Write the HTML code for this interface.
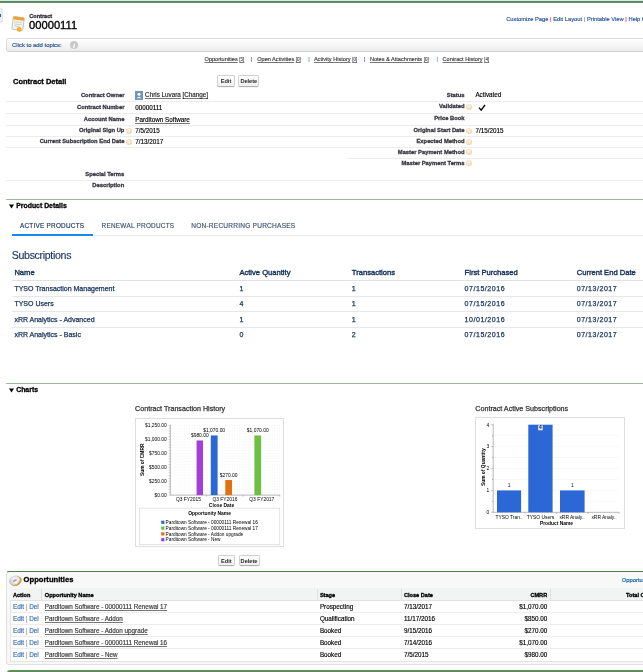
<!DOCTYPE html>
<html><head><meta charset="utf-8"><style>
html,body{margin:0;padding:0;background:#fff;width:643px;height:672px;overflow:hidden;position:relative}
body{font-family:"Liberation Sans",sans-serif}
.t{position:absolute;white-space:nowrap;line-height:1;-webkit-text-stroke:0.15px currentColor}
.sep{color:#c37;margin:0 0.1px}
.sep2{color:#7a9a70;margin:0 0.1px}
u{text-decoration-thickness:0.3px;text-underline-offset:0.5px;text-decoration-color:#777}
</style></head><body><div id="wrap" style="position:absolute;left:0;top:0;width:643px;height:672px;will-change:transform">
<div style="position:absolute;left:0px;top:0px;width:643px;height:1px;background:#d4e8f6"></div>
<div style="position:absolute;left:0px;top:1px;width:643px;height:2px;background:linear-gradient(#5a8552,#6a9060)"></div>
<div style="position:absolute;left:-3px;top:7.6px;width:5.5px;height:15.7px;background:#eeeeee;border:0.5px solid #e2e2e2;border-radius:2.5px;box-sizing:border-box"></div>
<div style="position:absolute;left:0px;top:14.4px;width:1.2px;height:2.5px;background:#2a5ab0"></div>
<svg style="position:absolute;left:10px;top:15px" width="16" height="18" viewBox="0 0 16 18">
<g transform="rotate(8 8 9)">
<rect x="2.5" y="2" width="11" height="13" rx="1" fill="#f4f4f0" stroke="#b9b9b0" stroke-width="0.8"/>
<rect x="2.5" y="2" width="11" height="3" rx="1" fill="#f0a030"/>
<rect x="4.5" y="7" width="7" height="0.8" fill="#c8c8c0"/>
<rect x="4.5" y="9" width="7" height="0.8" fill="#c8c8c0"/>
<rect x="4.5" y="11" width="5" height="0.8" fill="#c8c8c0"/>
<circle cx="10" cy="14.2" r="2.1" fill="#f5b82e" stroke="#e09a10" stroke-width="0.5"/>
</g></svg>
<div class="t" style="top:14.06px;font-size:5.6px;color:#333340;font-weight:bold;-webkit-text-stroke:0.3px currentColor;left:29.20px;">Contract</div>
<div class="t" style="top:20.12px;font-size:11.2px;color:#000;left:29.00px;-webkit-text-stroke:0.35px #000;">00000111</div>
<div class="t" style="top:17.23px;font-size:5.75px;color:#1f5096;left:506.20px;">Customize Page <span class="sep">|</span> Edit Layout <span class="sep2">|</span> Printable View <span class="sep">|</span> Help for this Page</div>
<div style="position:absolute;left:6.2px;top:38.4px;width:660px;height:13.5px;border:1px solid #dadada;border-bottom-color:#cfcfcf;border-radius:3px;background:linear-gradient(#ffffff,#ececec);box-sizing:border-box"></div>
<div class="t" style="top:42.81px;font-size:5.9px;color:#24508e;left:12.10px;">Click to add topics:</div>
<div style="position:absolute;left:70.1px;top:41.3px;width:7.8px;height:7.8px;border-radius:50%;background:#c8c8c8"></div>
<div class="t" style="top:43.74px;font-size:5.5px;color:#fff;font-weight:bold;-webkit-text-stroke:0.3px currentColor;left:74.00px;transform:translateX(-50%);font-style:italic;">i</div>
<div class="t" style="top:57.26px;font-size:5.6px;color:#3a3a3a;left:204.50px;"><u>Opportunities</u> <u style="font-size:4.5px;color:#555">[5]</u></div>
<div class="t" style="top:57.26px;font-size:5.6px;color:#3a3a3a;left:257.20px;"><u>Open Activities</u> <u style="font-size:4.5px;color:#555">[0]</u></div>
<div class="t" style="top:57.26px;font-size:5.6px;color:#3a3a3a;left:313.90px;"><u>Activity History</u> <u style="font-size:4.5px;color:#555">[0]</u></div>
<div class="t" style="top:57.26px;font-size:5.6px;color:#3a3a3a;left:369.90px;"><u>Notes &amp; Attachments</u> <u style="font-size:4.5px;color:#555">[0]</u></div>
<div class="t" style="top:57.26px;font-size:5.6px;color:#3a3a3a;left:442.50px;"><u>Contract History</u> <u style="font-size:4.5px;color:#555">[4]</u></div>
<div class="t" style="top:57.26px;font-size:5.6px;color:#c37;left:251.00px;">|</div>
<div class="t" style="top:57.26px;font-size:5.6px;color:#6a8ab8;left:308.20px;">|</div>
<div class="t" style="top:57.26px;font-size:5.6px;color:#c37;left:363.70px;">|</div>
<div class="t" style="top:57.26px;font-size:5.6px;color:#6a8ab8;left:436.60px;">|</div>
<div style="position:absolute;left:217.2px;top:75.1px;width:17.6px;height:11.6px;border:1px solid #d0d0d0;border-bottom-color:#b0b0b0;border-radius:2px;background:linear-gradient(#fff,#f0f0f0);box-sizing:border-box;box-shadow:0 0.5px 0.5px rgba(0,0,0,0.08)"></div>
<div class="t" style="top:78.96px;font-size:5.6px;color:#333;font-weight:bold;-webkit-text-stroke:0.3px currentColor;left:226.00px;transform:translateX(-50%);-webkit-text-stroke:0.05px #333;">Edit</div>
<div style="position:absolute;left:238.2px;top:75.1px;width:21.2px;height:11.6px;border:1px solid #d0d0d0;border-bottom-color:#b0b0b0;border-radius:2px;background:linear-gradient(#fff,#f0f0f0);box-sizing:border-box;box-shadow:0 0.5px 0.5px rgba(0,0,0,0.08)"></div>
<div class="t" style="top:78.96px;font-size:5.6px;color:#333;font-weight:bold;-webkit-text-stroke:0.3px currentColor;left:248.80px;transform:translateX(-50%);-webkit-text-stroke:0.05px #333;">Delete</div>
<div class="t" style="top:78.45px;font-size:7.5px;color:#000;font-weight:bold;-webkit-text-stroke:0.3px currentColor;left:13.00px;">Contract Detail</div>
<div style="position:absolute;left:6px;top:101.3px;width:637px;height:1px;background:#ececec"></div>
<div style="position:absolute;left:6px;top:113.3px;width:637px;height:1px;background:#ececec"></div>
<div style="position:absolute;left:6px;top:124.8px;width:637px;height:1px;background:#ececec"></div>
<div style="position:absolute;left:6px;top:136.2px;width:637px;height:1px;background:#ececec"></div>
<div style="position:absolute;left:6px;top:147.3px;width:637px;height:1px;background:#ececec"></div>
<div style="position:absolute;left:347.4px;top:158.2px;width:296px;height:1px;background:#ececec"></div>
<div class="t" style="top:92.69px;font-size:5.8px;color:#383844;font-weight:bold;-webkit-text-stroke:0.3px currentColor;right:518.60px;">Contract Owner</div>
<div style="position:absolute;left:135px;top:91px;width:8px;height:8.6px;background:#7493b8"></div>
<svg style="position:absolute;left:135px;top:91px" width="8" height="9" viewBox="0 0 8 9"><circle cx="4" cy="3.2" r="1.5" fill="#fff"/><path d="M1.6 7.2 Q4 4.2 6.4 7.2 Z" fill="#fff"/></svg>
<div class="t" style="top:92.27px;font-size:6.3px;color:#222;left:145.10px;"><u>Chris Luvara</u> <u>[Change]</u></div>
<div class="t" style="top:105.29px;font-size:5.8px;color:#383844;font-weight:bold;-webkit-text-stroke:0.3px currentColor;right:518.60px;">Contract Number</div>
<div class="t" style="top:104.87px;font-size:6.3px;color:#000;left:135.20px;">00000111</div>
<div class="t" style="top:117.09px;font-size:5.8px;color:#383844;font-weight:bold;-webkit-text-stroke:0.3px currentColor;right:518.60px;">Account Name</div>
<div class="t" style="top:116.67px;font-size:6.3px;color:#000;left:135.20px;"><u>Parditown Software</u></div>
<div class="t" style="top:128.49px;font-size:5.8px;color:#383844;font-weight:bold;-webkit-text-stroke:0.3px currentColor;right:518.60px;">Original Sign Up</div>
<div style="position:absolute;left:125.9px;top:127.9px;width:6.2px;height:6.2px;border-radius:50%;background:radial-gradient(circle at 45% 40%,#fbf0dc,#f2dcb4 55%,#e2c090)"></div>
<svg style="position:absolute;left:125.90px;top:127.90px" width="6.2" height="6.2" viewBox="0 0 6.2 6.2"><path d="M2.3 2.4 Q2.4 1.5 3.2 1.5 Q4.0 1.6 4.0 2.3 Q4.0 2.9 3.2 3.3 L3.2 3.8" stroke="#fff" stroke-width="0.6" fill="none"/><circle cx="3.2" cy="4.6" r="0.35" fill="#fff"/></svg>
<div class="t" style="top:128.07px;font-size:6.3px;color:#000;left:135.20px;">7/5/2015</div>
<div class="t" style="top:139.49px;font-size:5.8px;color:#383844;font-weight:bold;-webkit-text-stroke:0.3px currentColor;right:518.60px;">Current Subscription End Date</div>
<div style="position:absolute;left:125.9px;top:138.9px;width:6.2px;height:6.2px;border-radius:50%;background:radial-gradient(circle at 45% 40%,#fbf0dc,#f2dcb4 55%,#e2c090)"></div>
<svg style="position:absolute;left:125.90px;top:138.90px" width="6.2" height="6.2" viewBox="0 0 6.2 6.2"><path d="M2.3 2.4 Q2.4 1.5 3.2 1.5 Q4.0 1.6 4.0 2.3 Q4.0 2.9 3.2 3.3 L3.2 3.8" stroke="#fff" stroke-width="0.6" fill="none"/><circle cx="3.2" cy="4.6" r="0.35" fill="#fff"/></svg>
<div class="t" style="top:139.07px;font-size:6.3px;color:#000;left:135.20px;">7/13/2017</div>
<div class="t" style="top:92.69px;font-size:5.8px;color:#383844;font-weight:bold;-webkit-text-stroke:0.3px currentColor;right:178.50px;">Status</div>
<div class="t" style="top:92.27px;font-size:6.3px;color:#000;left:475.40px;">Activated</div>
<div class="t" style="top:104.49px;font-size:5.8px;color:#383844;font-weight:bold;-webkit-text-stroke:0.3px currentColor;right:178.50px;">Validated</div>
<div style="position:absolute;left:466.2px;top:103.89999999999999px;width:6.2px;height:6.2px;border-radius:50%;background:radial-gradient(circle at 45% 40%,#fbf0dc,#f2dcb4 55%,#e2c090)"></div>
<svg style="position:absolute;left:466.20px;top:103.90px" width="6.2" height="6.2" viewBox="0 0 6.2 6.2"><path d="M2.3 2.4 Q2.4 1.5 3.2 1.5 Q4.0 1.6 4.0 2.3 Q4.0 2.9 3.2 3.3 L3.2 3.8" stroke="#fff" stroke-width="0.6" fill="none"/><circle cx="3.2" cy="4.6" r="0.35" fill="#fff"/></svg>
<svg style="position:absolute;left:477px;top:103.5px" width="9" height="8" viewBox="0 0 9 8"><path d="M2 3.6 L4.2 6.2 L8 0.8" stroke="#000" stroke-width="1.35" fill="none"/></svg>
<div class="t" style="top:116.39px;font-size:5.8px;color:#383844;font-weight:bold;-webkit-text-stroke:0.3px currentColor;right:178.50px;">Price Book</div>
<div class="t" style="top:128.09px;font-size:5.8px;color:#383844;font-weight:bold;-webkit-text-stroke:0.3px currentColor;right:178.50px;">Original Start Date</div>
<div style="position:absolute;left:466.2px;top:127.5px;width:6.2px;height:6.2px;border-radius:50%;background:radial-gradient(circle at 45% 40%,#fbf0dc,#f2dcb4 55%,#e2c090)"></div>
<svg style="position:absolute;left:466.20px;top:127.50px" width="6.2" height="6.2" viewBox="0 0 6.2 6.2"><path d="M2.3 2.4 Q2.4 1.5 3.2 1.5 Q4.0 1.6 4.0 2.3 Q4.0 2.9 3.2 3.3 L3.2 3.8" stroke="#fff" stroke-width="0.6" fill="none"/><circle cx="3.2" cy="4.6" r="0.35" fill="#fff"/></svg>
<div class="t" style="top:127.67px;font-size:6.3px;color:#000;left:475.40px;">7/15/2015</div>
<div class="t" style="top:139.19px;font-size:5.8px;color:#383844;font-weight:bold;-webkit-text-stroke:0.3px currentColor;right:178.50px;">Expected Method</div>
<div style="position:absolute;left:466.2px;top:138.60000000000002px;width:6.2px;height:6.2px;border-radius:50%;background:radial-gradient(circle at 45% 40%,#fbf0dc,#f2dcb4 55%,#e2c090)"></div>
<svg style="position:absolute;left:466.20px;top:138.60px" width="6.2" height="6.2" viewBox="0 0 6.2 6.2"><path d="M2.3 2.4 Q2.4 1.5 3.2 1.5 Q4.0 1.6 4.0 2.3 Q4.0 2.9 3.2 3.3 L3.2 3.8" stroke="#fff" stroke-width="0.6" fill="none"/><circle cx="3.2" cy="4.6" r="0.35" fill="#fff"/></svg>
<div class="t" style="top:149.79px;font-size:5.8px;color:#383844;font-weight:bold;-webkit-text-stroke:0.3px currentColor;right:178.50px;">Master Payment Method</div>
<div style="position:absolute;left:466.2px;top:149.20000000000002px;width:6.2px;height:6.2px;border-radius:50%;background:radial-gradient(circle at 45% 40%,#fbf0dc,#f2dcb4 55%,#e2c090)"></div>
<svg style="position:absolute;left:466.20px;top:149.20px" width="6.2" height="6.2" viewBox="0 0 6.2 6.2"><path d="M2.3 2.4 Q2.4 1.5 3.2 1.5 Q4.0 1.6 4.0 2.3 Q4.0 2.9 3.2 3.3 L3.2 3.8" stroke="#fff" stroke-width="0.6" fill="none"/><circle cx="3.2" cy="4.6" r="0.35" fill="#fff"/></svg>
<div class="t" style="top:160.79px;font-size:5.8px;color:#383844;font-weight:bold;-webkit-text-stroke:0.3px currentColor;right:178.50px;">Master Payment Terms</div>
<div style="position:absolute;left:466.2px;top:160.20000000000002px;width:6.2px;height:6.2px;border-radius:50%;background:radial-gradient(circle at 45% 40%,#fbf0dc,#f2dcb4 55%,#e2c090)"></div>
<svg style="position:absolute;left:466.20px;top:160.20px" width="6.2" height="6.2" viewBox="0 0 6.2 6.2"><path d="M2.3 2.4 Q2.4 1.5 3.2 1.5 Q4.0 1.6 4.0 2.3 Q4.0 2.9 3.2 3.3 L3.2 3.8" stroke="#fff" stroke-width="0.6" fill="none"/><circle cx="3.2" cy="4.6" r="0.35" fill="#fff"/></svg>
<div class="t" style="top:171.89px;font-size:5.8px;color:#383844;font-weight:bold;-webkit-text-stroke:0.3px currentColor;right:518.80px;">Special Terms</div>
<div style="position:absolute;left:6px;top:179.8px;width:637px;height:1px;background:#ececec"></div>
<div class="t" style="top:183.19px;font-size:5.8px;color:#383844;font-weight:bold;-webkit-text-stroke:0.3px currentColor;right:518.80px;">Description</div>
<div style="position:absolute;left:6px;top:198.5px;width:637px;height:1.2px;background:#9cbc98"></div>
<svg style="position:absolute;left:8.5px;top:203.5px" width="5" height="5" viewBox="0 0 5 5"><path d="M0 0.5 L5 0.5 L2.5 4.5 Z" fill="#000"/></svg>
<div class="t" style="top:202.96px;font-size:6.9px;color:#000;font-weight:bold;-webkit-text-stroke:0.3px currentColor;left:16.20px;">Product Details</div>
<div class="t" style="top:222.78px;font-size:6.4px;color:#16325c;left:19.90px;letter-spacing:0.25px;">ACTIVE PRODUCTS</div>
<div class="t" style="top:222.78px;font-size:6.4px;color:#3d5270;left:101.60px;letter-spacing:0.25px;">RENEWAL PRODUCTS</div>
<div class="t" style="top:222.61px;font-size:6.6px;color:#3d5270;left:191.20px;letter-spacing:0.2px;">NON-RECURRING PURCHASES</div>
<div style="position:absolute;left:11.7px;top:235px;width:631.3px;height:1px;background:#e6e9ef"></div>
<div style="position:absolute;left:11.7px;top:234px;width:81.3px;height:2px;background:#1589ee"></div>
<div class="t" style="top:250.23px;font-size:10.6px;color:#16325c;left:11.80px;letter-spacing:-0.33px;">Subscriptions</div>
<div class="t" style="top:268.87px;font-size:7.6px;color:#16325c;left:14.40px;-webkit-text-stroke:0.4px currentColor;">Name</div>
<div class="t" style="top:268.87px;font-size:7.6px;color:#16325c;left:239.40px;-webkit-text-stroke:0.4px currentColor;">Active Quantity</div>
<div class="t" style="top:268.87px;font-size:7.6px;color:#16325c;left:351.80px;-webkit-text-stroke:0.4px currentColor;">Transactions</div>
<div class="t" style="top:268.87px;font-size:7.6px;color:#16325c;left:464.60px;-webkit-text-stroke:0.4px currentColor;">First Purchased</div>
<div class="t" style="top:268.87px;font-size:7.6px;color:#16325c;left:576.70px;-webkit-text-stroke:0.4px currentColor;">Current End Date</div>
<div style="position:absolute;left:11.7px;top:280px;width:631.3px;height:1.3px;background:#dde1e6"></div>
<div class="t" style="top:285.07px;font-size:7.0px;color:#16325c;left:14.40px;-webkit-text-stroke:0.25px currentColor;">TYSO Transaction Management</div>
<div class="t" style="top:285.07px;font-size:7.0px;color:#16325c;left:239.40px;-webkit-text-stroke:0.25px currentColor;">1</div>
<div class="t" style="top:285.07px;font-size:7.0px;color:#16325c;left:351.80px;-webkit-text-stroke:0.25px currentColor;">1</div>
<div class="t" style="top:285.07px;font-size:7.0px;color:#16325c;left:464.60px;letter-spacing:0.55px;-webkit-text-stroke:0.25px currentColor;">07/15/2016</div>
<div class="t" style="top:285.07px;font-size:7.0px;color:#16325c;left:576.70px;letter-spacing:0.55px;-webkit-text-stroke:0.25px currentColor;">07/13/2017</div>
<div class="t" style="top:300.47px;font-size:7.0px;color:#16325c;left:14.40px;-webkit-text-stroke:0.25px currentColor;">TYSO Users</div>
<div class="t" style="top:300.47px;font-size:7.0px;color:#16325c;left:239.40px;-webkit-text-stroke:0.25px currentColor;">4</div>
<div class="t" style="top:300.47px;font-size:7.0px;color:#16325c;left:351.80px;-webkit-text-stroke:0.25px currentColor;">1</div>
<div class="t" style="top:300.47px;font-size:7.0px;color:#16325c;left:464.60px;letter-spacing:0.55px;-webkit-text-stroke:0.25px currentColor;">07/15/2016</div>
<div class="t" style="top:300.47px;font-size:7.0px;color:#16325c;left:576.70px;letter-spacing:0.55px;-webkit-text-stroke:0.25px currentColor;">07/13/2017</div>
<div class="t" style="top:315.67px;font-size:7.0px;color:#16325c;left:14.40px;-webkit-text-stroke:0.25px currentColor;">xRR Analytics - Advanced</div>
<div class="t" style="top:315.67px;font-size:7.0px;color:#16325c;left:239.40px;-webkit-text-stroke:0.25px currentColor;">1</div>
<div class="t" style="top:315.67px;font-size:7.0px;color:#16325c;left:351.80px;-webkit-text-stroke:0.25px currentColor;">1</div>
<div class="t" style="top:315.67px;font-size:7.0px;color:#16325c;left:464.60px;letter-spacing:0.55px;-webkit-text-stroke:0.25px currentColor;">10/01/2016</div>
<div class="t" style="top:315.67px;font-size:7.0px;color:#16325c;left:576.70px;letter-spacing:0.55px;-webkit-text-stroke:0.25px currentColor;">07/13/2017</div>
<div class="t" style="top:330.67px;font-size:7.0px;color:#16325c;left:14.40px;-webkit-text-stroke:0.25px currentColor;">xRR Analytics - Basic</div>
<div class="t" style="top:330.67px;font-size:7.0px;color:#16325c;left:239.40px;-webkit-text-stroke:0.25px currentColor;">0</div>
<div class="t" style="top:330.67px;font-size:7.0px;color:#16325c;left:351.80px;-webkit-text-stroke:0.25px currentColor;">2</div>
<div class="t" style="top:330.67px;font-size:7.0px;color:#16325c;left:464.60px;letter-spacing:0.55px;-webkit-text-stroke:0.25px currentColor;">07/15/2016</div>
<div class="t" style="top:330.67px;font-size:7.0px;color:#16325c;left:576.70px;letter-spacing:0.55px;-webkit-text-stroke:0.25px currentColor;">07/13/2017</div>
<div style="position:absolute;left:11.7px;top:296.4px;width:631.3px;height:1px;background:#e4e7eb"></div>
<div style="position:absolute;left:11.7px;top:311.4px;width:631.3px;height:1px;background:#e4e7eb"></div>
<div style="position:absolute;left:11.7px;top:326.6px;width:631.3px;height:1px;background:#e4e7eb"></div>
<div style="position:absolute;left:6px;top:382.5px;width:637px;height:1.2px;background:#9cbc98"></div>
<svg style="position:absolute;left:8.5px;top:387.5px" width="5" height="5" viewBox="0 0 5 5"><path d="M0 0.5 L5 0.5 L2.5 4.5 Z" fill="#000"/></svg>
<div class="t" style="top:386.96px;font-size:6.9px;color:#000;font-weight:bold;-webkit-text-stroke:0.3px currentColor;left:16.20px;">Charts</div>
<div class="t" style="top:405.95px;font-size:7.15px;color:#333;left:135.10px;-webkit-text-stroke:0.25px #333;">Contract Transaction History</div>
<div class="t" style="top:405.95px;font-size:7.15px;color:#333;left:475.30px;-webkit-text-stroke:0.25px #333;">Contract Active Subscriptions</div>
<div id="chart1" style="position:absolute;left:134.5px;top:417.5px;width:149px;height:129px;border:1px solid #dedede;box-sizing:border-box"></div>
<div id="chart2" style="position:absolute;left:475px;top:417px;width:149.5px;height:111.5px;border:1px solid #dedede;box-sizing:border-box"></div>
<svg style="position:absolute;left:0;top:0" width="643" height="672" font-family="Liberation Sans">
<line x1="171.8" y1="425.40" x2="280" y2="425.40" stroke="#d8d8d8" stroke-width="0.45" stroke-dasharray="0.6 1.9"/>
<line x1="168.70000000000002" y1="425.40" x2="170.3" y2="425.40" stroke="#777" stroke-width="0.4"/>
<line x1="171.8" y1="428.19" x2="280" y2="428.19" stroke="#d8d8d8" stroke-width="0.45" stroke-dasharray="0.6 1.9"/>
<line x1="168.70000000000002" y1="428.19" x2="170.3" y2="428.19" stroke="#777" stroke-width="0.4"/>
<line x1="171.8" y1="430.98" x2="280" y2="430.98" stroke="#d8d8d8" stroke-width="0.45" stroke-dasharray="0.6 1.9"/>
<line x1="168.70000000000002" y1="430.98" x2="170.3" y2="430.98" stroke="#777" stroke-width="0.4"/>
<line x1="171.8" y1="433.76" x2="280" y2="433.76" stroke="#d8d8d8" stroke-width="0.45" stroke-dasharray="0.6 1.9"/>
<line x1="168.70000000000002" y1="433.76" x2="170.3" y2="433.76" stroke="#777" stroke-width="0.4"/>
<line x1="171.8" y1="436.55" x2="280" y2="436.55" stroke="#d8d8d8" stroke-width="0.45" stroke-dasharray="0.6 1.9"/>
<line x1="168.70000000000002" y1="436.55" x2="170.3" y2="436.55" stroke="#777" stroke-width="0.4"/>
<line x1="171.8" y1="439.34" x2="280" y2="439.34" stroke="#d8d8d8" stroke-width="0.45" stroke-dasharray="0.6 1.9"/>
<line x1="168.70000000000002" y1="439.34" x2="170.3" y2="439.34" stroke="#777" stroke-width="0.4"/>
<line x1="171.8" y1="442.13" x2="280" y2="442.13" stroke="#d8d8d8" stroke-width="0.45" stroke-dasharray="0.6 1.9"/>
<line x1="168.70000000000002" y1="442.13" x2="170.3" y2="442.13" stroke="#777" stroke-width="0.4"/>
<line x1="171.8" y1="444.92" x2="280" y2="444.92" stroke="#d8d8d8" stroke-width="0.45" stroke-dasharray="0.6 1.9"/>
<line x1="168.70000000000002" y1="444.92" x2="170.3" y2="444.92" stroke="#777" stroke-width="0.4"/>
<line x1="171.8" y1="447.70" x2="280" y2="447.70" stroke="#d8d8d8" stroke-width="0.45" stroke-dasharray="0.6 1.9"/>
<line x1="168.70000000000002" y1="447.70" x2="170.3" y2="447.70" stroke="#777" stroke-width="0.4"/>
<line x1="171.8" y1="450.49" x2="280" y2="450.49" stroke="#d8d8d8" stroke-width="0.45" stroke-dasharray="0.6 1.9"/>
<line x1="168.70000000000002" y1="450.49" x2="170.3" y2="450.49" stroke="#777" stroke-width="0.4"/>
<line x1="171.8" y1="453.28" x2="280" y2="453.28" stroke="#d8d8d8" stroke-width="0.45" stroke-dasharray="0.6 1.9"/>
<line x1="168.70000000000002" y1="453.28" x2="170.3" y2="453.28" stroke="#777" stroke-width="0.4"/>
<line x1="171.8" y1="456.07" x2="280" y2="456.07" stroke="#d8d8d8" stroke-width="0.45" stroke-dasharray="0.6 1.9"/>
<line x1="168.70000000000002" y1="456.07" x2="170.3" y2="456.07" stroke="#777" stroke-width="0.4"/>
<line x1="171.8" y1="458.86" x2="280" y2="458.86" stroke="#d8d8d8" stroke-width="0.45" stroke-dasharray="0.6 1.9"/>
<line x1="168.70000000000002" y1="458.86" x2="170.3" y2="458.86" stroke="#777" stroke-width="0.4"/>
<line x1="171.8" y1="461.64" x2="280" y2="461.64" stroke="#d8d8d8" stroke-width="0.45" stroke-dasharray="0.6 1.9"/>
<line x1="168.70000000000002" y1="461.64" x2="170.3" y2="461.64" stroke="#777" stroke-width="0.4"/>
<line x1="171.8" y1="464.43" x2="280" y2="464.43" stroke="#d8d8d8" stroke-width="0.45" stroke-dasharray="0.6 1.9"/>
<line x1="168.70000000000002" y1="464.43" x2="170.3" y2="464.43" stroke="#777" stroke-width="0.4"/>
<line x1="171.8" y1="467.22" x2="280" y2="467.22" stroke="#d8d8d8" stroke-width="0.45" stroke-dasharray="0.6 1.9"/>
<line x1="168.70000000000002" y1="467.22" x2="170.3" y2="467.22" stroke="#777" stroke-width="0.4"/>
<line x1="171.8" y1="470.01" x2="280" y2="470.01" stroke="#d8d8d8" stroke-width="0.45" stroke-dasharray="0.6 1.9"/>
<line x1="168.70000000000002" y1="470.01" x2="170.3" y2="470.01" stroke="#777" stroke-width="0.4"/>
<line x1="171.8" y1="472.80" x2="280" y2="472.80" stroke="#d8d8d8" stroke-width="0.45" stroke-dasharray="0.6 1.9"/>
<line x1="168.70000000000002" y1="472.80" x2="170.3" y2="472.80" stroke="#777" stroke-width="0.4"/>
<line x1="171.8" y1="475.58" x2="280" y2="475.58" stroke="#d8d8d8" stroke-width="0.45" stroke-dasharray="0.6 1.9"/>
<line x1="168.70000000000002" y1="475.58" x2="170.3" y2="475.58" stroke="#777" stroke-width="0.4"/>
<line x1="171.8" y1="478.37" x2="280" y2="478.37" stroke="#d8d8d8" stroke-width="0.45" stroke-dasharray="0.6 1.9"/>
<line x1="168.70000000000002" y1="478.37" x2="170.3" y2="478.37" stroke="#777" stroke-width="0.4"/>
<line x1="171.8" y1="481.16" x2="280" y2="481.16" stroke="#d8d8d8" stroke-width="0.45" stroke-dasharray="0.6 1.9"/>
<line x1="168.70000000000002" y1="481.16" x2="170.3" y2="481.16" stroke="#777" stroke-width="0.4"/>
<line x1="171.8" y1="483.95" x2="280" y2="483.95" stroke="#d8d8d8" stroke-width="0.45" stroke-dasharray="0.6 1.9"/>
<line x1="168.70000000000002" y1="483.95" x2="170.3" y2="483.95" stroke="#777" stroke-width="0.4"/>
<line x1="171.8" y1="486.74" x2="280" y2="486.74" stroke="#d8d8d8" stroke-width="0.45" stroke-dasharray="0.6 1.9"/>
<line x1="168.70000000000002" y1="486.74" x2="170.3" y2="486.74" stroke="#777" stroke-width="0.4"/>
<line x1="171.8" y1="489.52" x2="280" y2="489.52" stroke="#d8d8d8" stroke-width="0.45" stroke-dasharray="0.6 1.9"/>
<line x1="168.70000000000002" y1="489.52" x2="170.3" y2="489.52" stroke="#777" stroke-width="0.4"/>
<line x1="171.8" y1="492.31" x2="280" y2="492.31" stroke="#d8d8d8" stroke-width="0.45" stroke-dasharray="0.6 1.9"/>
<line x1="168.70000000000002" y1="492.31" x2="170.3" y2="492.31" stroke="#777" stroke-width="0.4"/>
<line x1="171.8" y1="495.10" x2="280" y2="495.10" stroke="#d8d8d8" stroke-width="0.45" stroke-dasharray="0.6 1.9"/>
<line x1="168.70000000000002" y1="495.10" x2="170.3" y2="495.10" stroke="#777" stroke-width="0.4"/>
<line x1="170.3" y1="424.9" x2="170.3" y2="495.1" stroke="#888" stroke-width="0.6"/>
<line x1="170.3" y1="495.1" x2="280" y2="495.1" stroke="#888" stroke-width="0.6"/>
<line x1="206.6" y1="495.1" x2="206.6" y2="496.70000000000005" stroke="#888" stroke-width="0.5"/>
<line x1="243.2" y1="495.1" x2="243.2" y2="496.70000000000005" stroke="#888" stroke-width="0.5"/>
<line x1="279.8" y1="495.1" x2="279.8" y2="496.70000000000005" stroke="#888" stroke-width="0.5"/>
<text x="166.8" y="496.90000000000003" font-size="4.9" text-anchor="end" fill="#000" >$0.00</text>
<text x="166.8" y="482.96000000000004" font-size="4.9" text-anchor="end" fill="#000" >$250.00</text>
<text x="166.8" y="469.02000000000004" font-size="4.9" text-anchor="end" fill="#000" >$500.00</text>
<text x="166.8" y="455.08" font-size="4.9" text-anchor="end" fill="#000" >$750.00</text>
<text x="166.8" y="441.14" font-size="4.9" text-anchor="end" fill="#000" >$1,000.00</text>
<text x="166.8" y="427.2" font-size="4.9" text-anchor="end" fill="#000" >$1,250.00</text>
<rect x="196.6" y="440.46" width="6.40" height="54.64" fill="#a23fdb"/>
<text x="199.8" y="437.0552" font-size="4.9" text-anchor="middle" fill="#000" >$980.00</text>
<rect x="210.8" y="435.44" width="6.80" height="59.66" fill="#2b68d6"/>
<text x="214.2" y="432.0368" font-size="4.9" text-anchor="middle" fill="#000" >$1,070.00</text>
<rect x="225.3" y="480.04" width="6.70" height="15.06" fill="#e07010"/>
<text x="228.65" y="476.64480000000003" font-size="4.9" text-anchor="middle" fill="#000" >$270.00</text>
<rect x="254.4" y="435.44" width="6.70" height="59.66" fill="#6cc143"/>
<text x="257.75" y="432.0368" font-size="4.9" text-anchor="middle" fill="#000" >$1,070.00</text>
<text x="188.5" y="500.6" font-size="4.9" text-anchor="middle" fill="#000" >Q3 FY2015</text>
<text x="225" y="500.6" font-size="4.9" text-anchor="middle" fill="#000" >Q3 FY2016</text>
<text x="261.8" y="500.6" font-size="4.9" text-anchor="middle" fill="#000" >Q3 FY2017</text>
<text x="221.5" y="506.6" font-size="4.9" text-anchor="middle" fill="#000" font-weight="bold" >Close Date</text>
<text transform="translate(143.9 459.8) rotate(-90)" font-size="4.9" font-weight="bold" text-anchor="middle">Sum of CMRR</text>
<rect x="139.5" y="508.1" width="140.3" height="36.6" fill="none" stroke="#d0d0d0" stroke-width="0.6"/>
<text x="209.6" y="515.0" font-size="4.9" text-anchor="middle" fill="#000" font-weight="bold" >Opportunity Name</text>
<rect x="161.2" y="520.70" width="3.2" height="3.2" fill="#2b68d6"/>
<text x="165.6" y="524.0" font-size="4.75" text-anchor="start" fill="#000" >Parditown Software - 00000111 Renewal 16</text>
<rect x="161.2" y="526.50" width="3.2" height="3.2" fill="#6cc143"/>
<text x="165.6" y="529.8" font-size="4.75" text-anchor="start" fill="#000" >Parditown Software - 00000111 Renewal 17</text>
<rect x="161.2" y="532.30" width="3.2" height="3.2" fill="#e07010"/>
<text x="165.6" y="535.6" font-size="4.75" text-anchor="start" fill="#000" >Parditown Software - Addon upgrade</text>
<rect x="161.2" y="538.10" width="3.2" height="3.2" fill="#a23fdb"/>
<text x="165.6" y="541.4" font-size="4.75" text-anchor="start" fill="#000" >Parditown Software - New</text>
<line x1="495.2" y1="501.35" x2="619" y2="501.35" stroke="#d4d4d4" stroke-width="0.5" stroke-dasharray="0.7 1.3"/>
<line x1="495.2" y1="490.40" x2="619" y2="490.40" stroke="#d4d4d4" stroke-width="0.5" stroke-dasharray="0.7 1.3"/>
<line x1="495.2" y1="479.45" x2="619" y2="479.45" stroke="#d4d4d4" stroke-width="0.5" stroke-dasharray="0.7 1.3"/>
<line x1="495.2" y1="468.50" x2="619" y2="468.50" stroke="#d4d4d4" stroke-width="0.5" stroke-dasharray="0.7 1.3"/>
<line x1="495.2" y1="457.55" x2="619" y2="457.55" stroke="#d4d4d4" stroke-width="0.5" stroke-dasharray="0.7 1.3"/>
<line x1="495.2" y1="446.60" x2="619" y2="446.60" stroke="#d4d4d4" stroke-width="0.5" stroke-dasharray="0.7 1.3"/>
<line x1="495.2" y1="435.65" x2="619" y2="435.65" stroke="#d4d4d4" stroke-width="0.5" stroke-dasharray="0.7 1.3"/>
<line x1="491.4" y1="512.30" x2="493.2" y2="512.30" stroke="#777" stroke-width="0.5"/>
<line x1="492.0" y1="501.35" x2="493.2" y2="501.35" stroke="#777" stroke-width="0.5"/>
<line x1="491.4" y1="490.40" x2="493.2" y2="490.40" stroke="#777" stroke-width="0.5"/>
<line x1="492.0" y1="479.45" x2="493.2" y2="479.45" stroke="#777" stroke-width="0.5"/>
<line x1="491.4" y1="468.50" x2="493.2" y2="468.50" stroke="#777" stroke-width="0.5"/>
<line x1="492.0" y1="457.55" x2="493.2" y2="457.55" stroke="#777" stroke-width="0.5"/>
<line x1="491.4" y1="446.60" x2="493.2" y2="446.60" stroke="#777" stroke-width="0.5"/>
<line x1="492.0" y1="435.65" x2="493.2" y2="435.65" stroke="#777" stroke-width="0.5"/>
<line x1="491.4" y1="424.70" x2="493.2" y2="424.70" stroke="#777" stroke-width="0.5"/>
<text x="489.3" y="514.0999999999999" font-size="4.9" text-anchor="end" fill="#000" >0</text>
<text x="489.3" y="492.2" font-size="4.9" text-anchor="end" fill="#000" >1</text>
<text x="489.3" y="470.3" font-size="4.9" text-anchor="end" fill="#000" >2</text>
<text x="489.3" y="448.4" font-size="4.9" text-anchor="end" fill="#000" >3</text>
<text x="489.3" y="426.5" font-size="4.9" text-anchor="end" fill="#000" >4</text>
<line x1="493.2" y1="424.2" x2="493.2" y2="512.3" stroke="#888" stroke-width="0.6"/>
<line x1="493.2" y1="512.3" x2="619.2" y2="512.3" stroke="#888" stroke-width="0.6"/>
<line x1="524.8" y1="512.3" x2="524.8" y2="513.9" stroke="#888" stroke-width="0.5"/>
<line x1="556.4" y1="512.3" x2="556.4" y2="513.9" stroke="#888" stroke-width="0.5"/>
<line x1="588" y1="512.3" x2="588" y2="513.9" stroke="#888" stroke-width="0.5"/>
<line x1="619.2" y1="512.3" x2="619.2" y2="513.9" stroke="#888" stroke-width="0.5"/>
<rect x="497.0" y="490.40" width="24.10" height="21.90" fill="#2b68d6"/>
<text x="509.05" y="487.2" font-size="4.9" text-anchor="middle" fill="#000" >1</text>
<rect x="528.3" y="424.70" width="24.30" height="87.60" fill="#2b68d6"/>
<rect x="538.1500000000001" y="425.30" width="4.6" height="5" fill="#dde6f6"/>
<text x="540.45" y="429.4" font-size="4.9" text-anchor="middle" fill="#222" font-weight="bold" >4</text>
<rect x="560.0" y="490.40" width="24.60" height="21.90" fill="#2b68d6"/>
<text x="572.3" y="487.2" font-size="4.9" text-anchor="middle" fill="#000" >1</text>
<text x="509" y="518.7" font-size="4.9" text-anchor="middle" fill="#000" >TYSO Tran..</text>
<text x="540.5" y="518.7" font-size="4.9" text-anchor="middle" fill="#000" >TYSO Users</text>
<text x="572" y="518.7" font-size="4.9" text-anchor="middle" fill="#000" >xRR Analy..</text>
<text x="604" y="518.7" font-size="4.9" text-anchor="middle" fill="#000" >xRR Analy..</text>
<text x="556.5" y="524.9" font-size="4.9" text-anchor="middle" fill="#000" font-weight="bold" >Product Name</text>
<text transform="translate(485 467.2) rotate(-90)" font-size="4.9" font-weight="bold" text-anchor="middle">Sum of Quantity</text>
</svg>
<div style="position:absolute;left:217.6px;top:554.7px;width:17.4px;height:11.1px;border:1px solid #d0d0d0;border-bottom-color:#b0b0b0;border-radius:2px;background:linear-gradient(#fff,#f0f0f0);box-sizing:border-box;box-shadow:0 0.5px 0.5px rgba(0,0,0,0.08)"></div>
<div class="t" style="top:558.56px;font-size:5.6px;color:#333;font-weight:bold;-webkit-text-stroke:0.3px currentColor;left:226.30px;transform:translateX(-50%);-webkit-text-stroke:0.05px #333;">Edit</div>
<div style="position:absolute;left:238.5px;top:554.7px;width:21px;height:11.1px;border:1px solid #d0d0d0;border-bottom-color:#b0b0b0;border-radius:2px;background:linear-gradient(#fff,#f0f0f0);box-sizing:border-box;box-shadow:0 0.5px 0.5px rgba(0,0,0,0.08)"></div>
<div class="t" style="top:558.56px;font-size:5.6px;color:#333;font-weight:bold;-webkit-text-stroke:0.3px currentColor;left:249.00px;transform:translateX(-50%);-webkit-text-stroke:0.05px #333;">Delete</div>
<div style="position:absolute;left:6.2px;top:571.2px;width:640px;height:93.5px;border-top:1.6px solid #4e7d48;border-left:1px solid #e0e0e0;border-bottom:1px solid #e0e0e0;background:#f8f8f8;box-sizing:border-box;border-radius:3px 0 0 3px"></div>
<svg style="position:absolute;left:8px;top:573.5px" width="14" height="13" viewBox="0 0 14 13"><defs><linearGradient id="cg" x1="0" y1="0" x2="1" y2="0"><stop offset="0" stop-color="#c8c8cc"/><stop offset="0.5" stop-color="#f2f3f6"/><stop offset="1" stop-color="#e4e6ea"/></linearGradient></defs><g transform="rotate(-28 7 6.5)"><ellipse cx="7.6" cy="7.5" rx="6" ry="4.6" fill="#d4a23a"/><ellipse cx="6.7" cy="6.3" rx="5.5" ry="4.2" fill="url(#cg)" stroke="#b0b0b0" stroke-width="0.45"/><path d="M4.9 7.3 L5.3 5.3 L6.2 6.3 L6.9 4.9 L7.6 6.3 L8.5 5.3 L8.9 7.3 Z" fill="#9a9aa4"/></g></svg>
<div class="t" style="top:575.87px;font-size:7.6px;color:#000;font-weight:bold;-webkit-text-stroke:0.3px currentColor;left:23.60px;-webkit-text-stroke:0.3px #000;">Opportunities</div>
<div class="t" style="top:578.29px;font-size:5.8px;color:#015ba7;left:621.80px;">Opportunities Help</div>
<div style="position:absolute;left:10px;top:588.3px;width:633px;height:73.4px;background:#fff;border:1px solid #e4e4e4;border-right:none;box-sizing:border-box"></div>
<div style="position:absolute;left:10px;top:588.3px;width:633px;height:12.3px;background:#f2f3f3;border-bottom:1px solid #e0e3e5;box-sizing:border-box"></div>
<div style="position:absolute;left:41px;top:589px;width:1px;height:11.5px;background:#dfe1e2"></div>
<div style="position:absolute;left:316.9px;top:589px;width:1px;height:11.5px;background:#dfe1e2"></div>
<div style="position:absolute;left:400.7px;top:589px;width:1px;height:11.5px;background:#dfe1e2"></div>
<div style="position:absolute;left:550.2px;top:589px;width:1px;height:11.5px;background:#dfe1e2"></div>
<div class="t" style="top:592.86px;font-size:5.6px;color:#000;font-weight:bold;-webkit-text-stroke:0.3px currentColor;left:12.90px;">Action</div>
<div class="t" style="top:592.86px;font-size:5.6px;color:#000;font-weight:bold;-webkit-text-stroke:0.3px currentColor;left:44.80px;">Opportunity Name</div>
<div class="t" style="top:592.86px;font-size:5.6px;color:#000;font-weight:bold;-webkit-text-stroke:0.3px currentColor;left:319.90px;">Stage</div>
<div class="t" style="top:592.86px;font-size:5.6px;color:#000;font-weight:bold;-webkit-text-stroke:0.3px currentColor;left:404.00px;">Close Date</div>
<div class="t" style="top:592.86px;font-size:5.6px;color:#000;font-weight:bold;-webkit-text-stroke:0.3px currentColor;right:95.80px;">CMRR</div>
<div class="t" style="top:592.86px;font-size:5.6px;color:#000;font-weight:bold;-webkit-text-stroke:0.3px currentColor;left:626.00px;">Total Contract Value</div>
<div class="t" style="top:604.08px;font-size:6.4px;color:#3a6db0;left:12.90px;">Edit <span style="color:#999">|</span> Del</div>
<div class="t" style="top:604.17px;font-size:6.3px;color:#333;left:44.80px;"><u>Parditown Software - 00000111 Renewal 17</u></div>
<div class="t" style="top:604.17px;font-size:6.3px;color:#000;left:319.90px;">Prospecting</div>
<div class="t" style="top:604.17px;font-size:6.3px;color:#000;left:404.00px;">7/13/2017</div>
<div class="t" style="top:604.17px;font-size:6.3px;color:#000;right:95.80px;">$1,070.00</div>
<div class="t" style="top:615.98px;font-size:6.4px;color:#3a6db0;left:12.90px;">Edit <span style="color:#999">|</span> Del</div>
<div class="t" style="top:616.07px;font-size:6.3px;color:#333;left:44.80px;"><u>Parditown Software - Addon</u></div>
<div class="t" style="top:616.07px;font-size:6.3px;color:#000;left:319.90px;">Qualification</div>
<div class="t" style="top:616.07px;font-size:6.3px;color:#000;left:404.00px;">11/17/2016</div>
<div class="t" style="top:616.07px;font-size:6.3px;color:#000;right:95.80px;">$850.00</div>
<div class="t" style="top:628.18px;font-size:6.4px;color:#3a6db0;left:12.90px;">Edit <span style="color:#999">|</span> Del</div>
<div class="t" style="top:628.27px;font-size:6.3px;color:#333;left:44.80px;"><u>Parditown Software - Addon upgrade</u></div>
<div class="t" style="top:628.27px;font-size:6.3px;color:#000;left:319.90px;">Booked</div>
<div class="t" style="top:628.27px;font-size:6.3px;color:#000;left:404.00px;">9/15/2016</div>
<div class="t" style="top:628.27px;font-size:6.3px;color:#000;right:95.80px;">$270.00</div>
<div class="t" style="top:640.18px;font-size:6.4px;color:#3a6db0;left:12.90px;">Edit <span style="color:#999">|</span> Del</div>
<div class="t" style="top:640.27px;font-size:6.3px;color:#333;left:44.80px;"><u>Parditown Software - 00000111 Renewal 16</u></div>
<div class="t" style="top:640.27px;font-size:6.3px;color:#000;left:319.90px;">Booked</div>
<div class="t" style="top:640.27px;font-size:6.3px;color:#000;left:404.00px;">7/14/2016</div>
<div class="t" style="top:640.27px;font-size:6.3px;color:#000;right:95.80px;">$1,070.00</div>
<div class="t" style="top:652.08px;font-size:6.4px;color:#3a6db0;left:12.90px;">Edit <span style="color:#999">|</span> Del</div>
<div class="t" style="top:652.17px;font-size:6.3px;color:#333;left:44.80px;"><u>Parditown Software - New</u></div>
<div class="t" style="top:652.17px;font-size:6.3px;color:#000;left:319.90px;">Booked</div>
<div class="t" style="top:652.17px;font-size:6.3px;color:#000;left:404.00px;">7/5/2015</div>
<div class="t" style="top:652.17px;font-size:6.3px;color:#000;right:95.80px;">$980.00</div>
<div style="position:absolute;left:10.5px;top:612.3px;width:632.5px;height:1px;background:#ededed"></div>
<div style="position:absolute;left:10.5px;top:624.3px;width:632.5px;height:1px;background:#ededed"></div>
<div style="position:absolute;left:10.5px;top:636.4px;width:632.5px;height:1px;background:#ededed"></div>
<div style="position:absolute;left:10.5px;top:648.4px;width:632.5px;height:1px;background:#ededed"></div>
<div style="position:absolute;left:7px;top:669.5px;width:640px;height:3px;background:#5c8f5a;border-radius:3px 0 0 0"></div>
</div></body></html>
